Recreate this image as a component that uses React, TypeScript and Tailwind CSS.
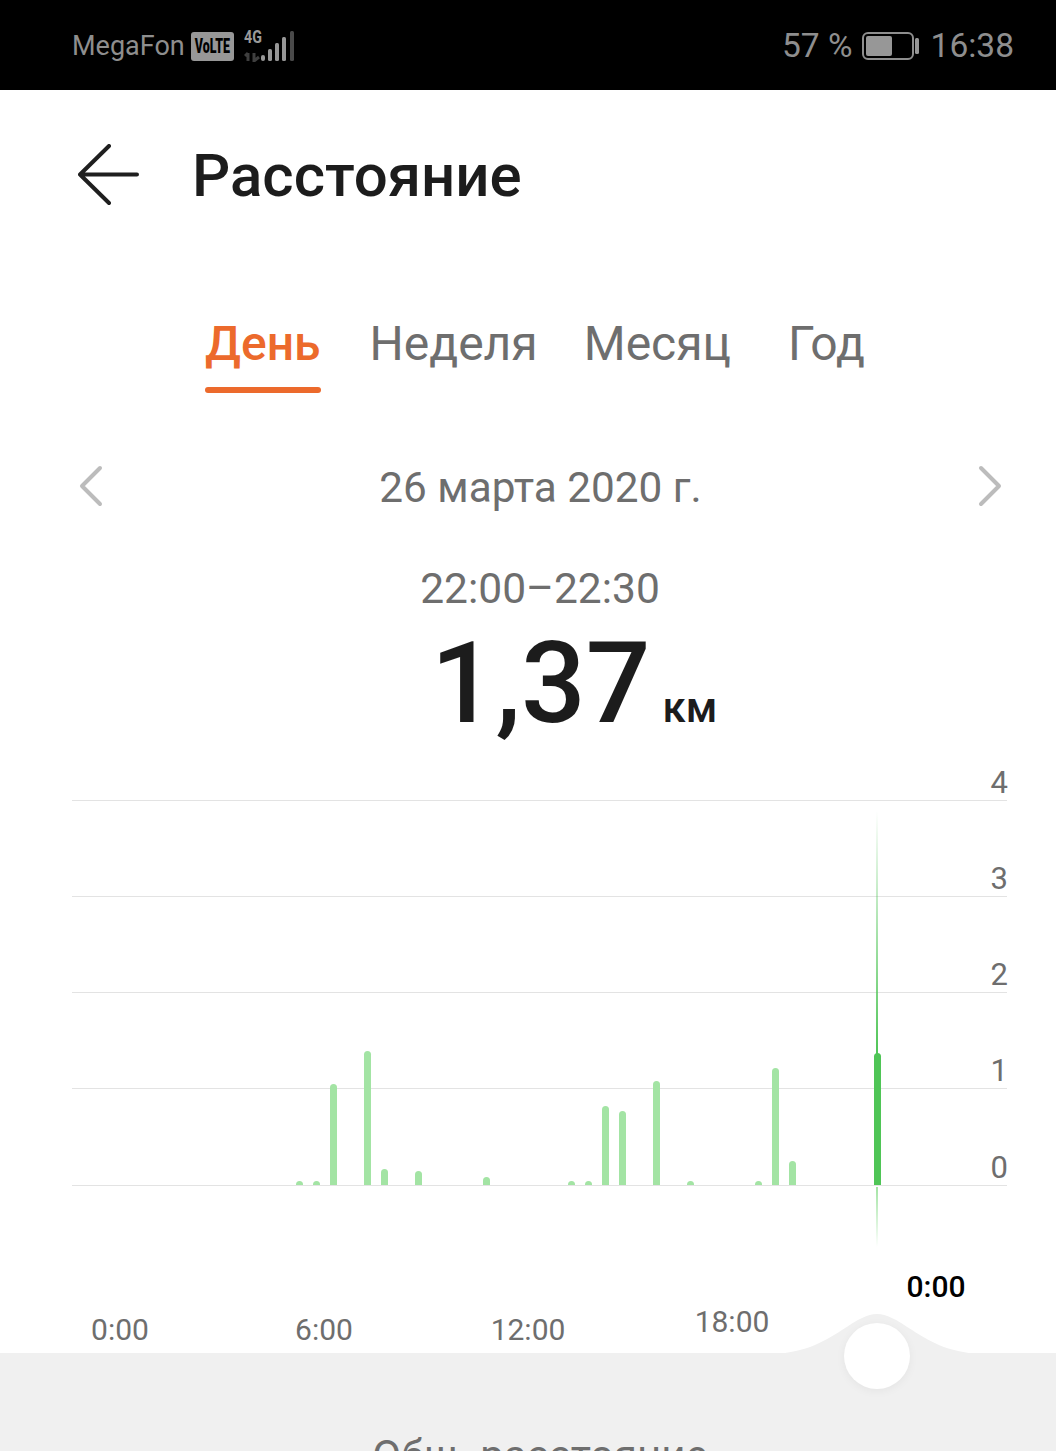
import React from 'react';

const bars: { slot: number; top: number }[] = [
  { slot: 10, top: 1181 },
  { slot: 11, top: 1181 },
  { slot: 12, top: 1084 },
  { slot: 14, top: 1051 },
  { slot: 15, top: 1169 },
  { slot: 17, top: 1171 },
  { slot: 21, top: 1177 },
  { slot: 26, top: 1181 },
  { slot: 27, top: 1181 },
  { slot: 28, top: 1106 },
  { slot: 29, top: 1111 },
  { slot: 31, top: 1081 },
  { slot: 33, top: 1181 },
  { slot: 37, top: 1181 },
  { slot: 38, top: 1068 },
  { slot: 39, top: 1161 },
];

const activeSlot = 44;
const slots = Array.from({ length: 48 }, (_, i) => i);

const StatusBar = () => (
  <div className="h-[90px] bg-black flex items-center justify-between pt-[2px] pl-[72px] pr-[42px] text-[#8e8e8e]">
    <div className="flex items-center">
      <span className="text-[27px] leading-none">MegaFon</span>
      <span className="ml-[6px] w-[43px] h-[29px] rounded-[3px] bg-[#979797] flex items-center justify-center overflow-hidden">
        <span className="text-black text-[20px] font-black leading-none scale-x-[0.62] whitespace-nowrap">VoLTE</span>
      </span>
      <div className="relative ml-[10px] w-[52px] h-[32px]">
        <span className="absolute left-0 -top-[3px] origin-left text-[#9a9a9a] text-[19px] font-bold leading-[20px] scale-x-[0.75]">4G</span>
        <svg width="52" height="32" viewBox="0 0 52 32" className="absolute left-0 top-0">
          <path d="M4 23v8M1 26l3-3" stroke="#3f3f3f" strokeWidth="3" fill="none" />
          <path d="M10 23v8l5-4" stroke="#3f3f3f" strokeWidth="3" fill="none" />
          <rect x="17" y="25" width="4" height="6" rx="2" fill="#979797" />
          <rect x="24" y="19" width="4" height="12" rx="1.500" fill="#979797" />
          <rect x="31" y="13" width="4" height="18" rx="1.500" fill="#979797" />
          <rect x="38" y="7" width="4" height="24" rx="1.500" fill="#979797" />
          <rect x="46" y="1" width="4" height="30" rx="1.500" fill="#4a4a4a" />
        </svg>
      </div>
    </div>
    <div className="flex items-center text-[33.500px] leading-none">
      <span>57 %</span>
      <svg width="58" height="28" viewBox="0 0 58 28" className="ml-[9px]">
        <rect x="1" y="1" width="50" height="26" rx="5" fill="none" stroke="#8e8e8e" strokeWidth="2" />
        <rect x="4" y="4" width="26" height="20" rx="2" fill="#979797" />
        <rect x="53" y="6" width="4" height="16" rx="1.500" fill="#979797" />
      </svg>
      <span className="ml-[11px]">16:38</span>
    </div>
  </div>
);

const Header = () => (
  <div className="h-[172px] flex items-center pl-[78px]">
    <svg width="62" height="62" viewBox="0 0 62 62" className="shrink-0 mb-[3px]">
      <path d="M31 2 2 30.500 31 59M2 30.500h57" fill="none" stroke="#1f1f1f" strokeWidth="4" strokeLinecap="round" strokeLinejoin="round" />
    </svg>
    <span className="ml-[52px] text-[60px] font-medium text-[#1c1c1c] leading-none">Расстояние</span>
  </div>
);

const Tabs = () => (
  <div className="mt-[54px] h-[75px] pl-[205px] flex items-start text-[48px] leading-[56px] text-[#6e6e6e]">
    <div className="flex flex-col text-[#ec6a2c] font-medium">
      <span>День</span>
      <div className="mt-[15px] h-[6px] rounded-full bg-[#ec6a2c]" />
    </div>
    <span className="ml-[49px]">Неделя</span>
    <span className="ml-[46px]">Месяц</span>
    <span className="ml-[57px]">Год</span>
  </div>
);

const DateRow = () => (
  <div className="mt-[67px] h-[60px] pl-[78px] pr-[53px] flex items-center justify-between">
    <svg width="26" height="42" viewBox="0 0 26 42" className="mb-[4px]">
      <path d="M22 3 4 21l18 18" fill="none" stroke="#bcbcbc" strokeWidth="4" strokeLinecap="round" strokeLinejoin="round" />
    </svg>
    <span className="text-[42.300px] leading-none text-[#6e6e6e]">26 марта 2020 г.</span>
    <svg width="26" height="42" viewBox="0 0 26 42" className="mb-[4px]">
      <path d="M4 3l18 18L4 39" fill="none" stroke="#bcbcbc" strokeWidth="4" strokeLinecap="round" strokeLinejoin="round" />
    </svg>
  </div>
);

const Summary = () => (
  <div className="mt-[50px] pl-[24px] flex flex-col items-center">
    <span className="text-[42.500px] leading-[42px] text-[#6e6e6e]">22:00–22:30</span>
    <div className="mt-[19px] ml-[68px] flex items-baseline text-[#1c1c1c] font-medium">
      <span className="text-[114px] leading-[108px]">1,37</span>
      <span className="ml-[12px] text-[42px] leading-none">км</span>
    </div>
  </div>
);

const Chart = () => (
  <div className="relative mt-[31px] ml-[72px] w-[935px] text-[31px] leading-none text-[#6e6e6e]">
    {['4', '3', '2', '1', '0'].map((label, i) => (
      <div
        key={label}
        className={`flex items-end justify-end border-b border-[#e3e3e3] pb-[2px] ${i === 0 ? 'h-[33px]' : i === 4 ? 'h-[97px]' : 'h-[96px]'}`}
      >
        <span className="mr-[-1px]">{label}</span>
      </div>
    ))}
    <div className="absolute left-[48.500px] bottom-[1px] flex items-end">
      {slots.map(i => {
        const bar = bars.find(b => b.slot === i);
        const active = i === activeSlot;
        const h = active ? 132 : bar ? 1185 - bar.top : 0;
        return (
          <div key={i} className="w-[17px] flex justify-center">
            {h > 0 && (
              <div
                className={`w-[7px] rounded-t-[3.500px] ${active ? 'bg-[#4fc556]' : 'bg-[#a3e4a4]'}`}
                style={{ height: h }}
              />
            )}
          </div>
        );
      })}
    </div>
    <div className="absolute left-[804px] top-[43px] w-[2px] h-[243px] bg-gradient-to-b from-[#4fc55600] to-[#4fc556]" />
    <div className="absolute left-[804px] top-[419px] w-[2px] h-[60px] bg-gradient-to-b from-[#a3e4a4] to-[#a3e4a400]" />
  </div>
);

const Axis = () => (
  <div className="h-[167px] pl-[18px] pb-[8px] flex items-end text-[30px] leading-none text-[#6e6e6e]">
    <span className="w-[204px] text-center">0:00</span>
    <span className="w-[204px] text-center">6:00</span>
    <span className="w-[204px] text-center">12:00</span>
    <span className="w-[204px] text-center mb-[8px]">18:00</span>
    <span className="w-[204px] text-center mb-[43px] font-medium text-black">0:00</span>
  </div>
);

const Footer = () => (
  <div className="relative h-[140px] bg-[#f0f0f0] flex justify-center pl-[24px] pt-[79px]">
    <svg width="220" height="41" viewBox="0 0 220 41" className="absolute left-[767px] -top-[40px]">
      <path d="M0 41C35 41 55 30 75 17 92 6 100 1 110 1 120 1 128 6 145 17 165 30 185 41 220 41Z" fill="#f0f0f0" />
    </svg>
    <div className="absolute left-[844px] -top-[30px] w-[66px] h-[66px] rounded-full bg-white shadow-[0_2px_10px_rgba(0,0,0,0.05)]" />
    <span className="text-[42px] leading-[48px] text-[#6e6e6e] whitespace-nowrap">Общ. расстояние</span>
  </div>
);

export default function App() {
  return (
    <div className="w-[1056px] h-[1451px] overflow-hidden bg-white font-['Roboto',sans-serif]">
      <StatusBar />
      <Header />
      <Tabs />
      <DateRow />
      <Summary />
      <Chart />
      <Axis />
      <Footer />
    </div>
  );
}
